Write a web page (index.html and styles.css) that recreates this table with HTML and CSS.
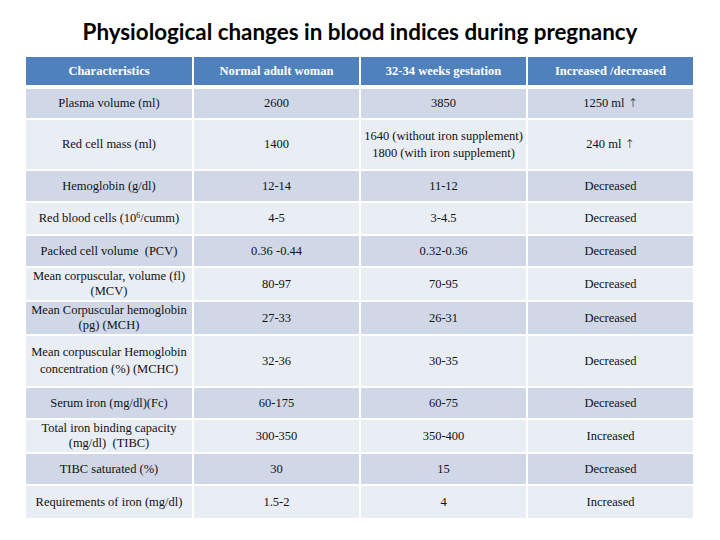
FILE: index.html
```html
<!DOCTYPE html>
<html>
<head>
<meta charset="utf-8">
<link rel="stylesheet" href="styles.css">
</head>
<body>
<div class="slide">
  <h1 class="title">Physiological changes in blood indices during pregnancy</h1>
  <table class="data">
    <thead>
      <tr class="r-head">
        <th>Characteristics</th>
        <th>Normal adult woman</th>
        <th>32-34 weeks gestation</th>
        <th>Increased /decreased</th>
      </tr>
    </thead>
    <tbody>
      <tr class="band1 h29">
        <td>Plasma volume (ml)</td><td>2600</td><td>3850</td><td>1250 ml <span class="arrow">↑</span></td>
      </tr>
      <tr class="band2 h49 loose">
        <td>Red cell mass (ml)</td><td>1400</td><td>1640 (without iron supplement)<br>1800 (with iron supplement)</td><td>240 ml <span class="arrow">↑</span></td>
      </tr>
      <tr class="band1 h30">
        <td>Hemoglobin (g/dl)</td><td>12-14</td><td>11-12</td><td>Decreased</td>
      </tr>
      <tr class="band2 h31">
        <td>Red blood cells (10<sup>6</sup>/cumm)</td><td>4-5</td><td>3-4.5</td><td>Decreased</td>
      </tr>
      <tr class="band1 h30">
        <td>Packed cell volume &nbsp;(PCV)</td><td>0.36 -0.44</td><td>0.32-0.36</td><td>Decreased</td>
      </tr>
      <tr class="band2 h32">
        <td>Mean corpuscular, volume (fl)<br>(MCV)</td><td>80-97</td><td>70-95</td><td>Decreased</td>
      </tr>
      <tr class="band1 h32">
        <td>Mean Corpuscular hemoglobin<br>(pg) (MCH)</td><td>27-33</td><td>26-31</td><td>Decreased</td>
      </tr>
      <tr class="band2 h50 loose">
        <td>Mean corpuscular Hemoglobin<br>concentration (%) (MCHC)</td><td>32-36</td><td>30-35</td><td>Decreased</td>
      </tr>
      <tr class="band1 h30">
        <td>Serum iron (mg/dl)(Fc)</td><td>60-175</td><td>60-75</td><td>Decreased</td>
      </tr>
      <tr class="band2 h32">
        <td>Total iron binding capacity<br>(mg/dl) &nbsp;(TIBC)</td><td>300-350</td><td>350-400</td><td>Increased</td>
      </tr>
      <tr class="band1 h30">
        <td>TIBC saturated (%)</td><td>30</td><td>15</td><td>Decreased</td>
      </tr>
      <tr class="band2 h32">
        <td>Requirements of iron (mg/dl)</td><td>1.5-2</td><td>4</td><td>Increased</td>
      </tr>
    </tbody>
  </table>
</div>
</body>
</html>
```

FILE: styles.css
```css
html, body {
  margin: 0;
  padding: 0;
  background: #ffffff;
}

.slide {
  width: 720px;
  height: 540px;
  display: flex;
  flex-direction: column;
  align-items: flex-start;
}

.title {
  margin: 17px 0 0 0;
  width: 720px;
  text-align: center;
  font-family: Lato, "Open Sans", sans-serif;
  font-weight: 700;
  font-size: 22.4px;
  line-height: 30px;
  color: #000000;
}

.data {
  margin: 8px 0 0 24px;
  border-collapse: separate;
  border-spacing: 2px;
  table-layout: fixed;
  width: 671px;
  font-family: "Liberation Serif", "Times New Roman", serif;
  font-size: 12.5px;
  color: #111111;
}

.data th,
.data td {
  padding: 0 2px;
  text-align: center;
  vertical-align: middle;
  line-height: 15px;
}

.data th:first-child,
.data td:first-child {
  width: 162px;
}

.r-head th {
  height: 28px;
  background: #4f81bd;
  background-clip: padding-box;
  border-bottom: 2px solid #ffffff;
  color: #ffffff;
  font-weight: 700;
}

.band1 td { background: #d0d8e8; }
.band2 td { background: #e9edf4; }

.loose td { line-height: 17px; }

.h29 td { height: 29px; }
.h30 td { height: 30px; }
.h31 td { height: 31px; }
.h32 td { height: 32px; }
.h49 td { height: 49px; }
.h50 td { height: 50px; }

.arrow {
  font-family: "DejaVu Sans", sans-serif;
  font-size: 12px;
  font-weight: 300;
}

.data sup {
  font-size: 8px;
  line-height: 0;
  vertical-align: 4px;
}
```
